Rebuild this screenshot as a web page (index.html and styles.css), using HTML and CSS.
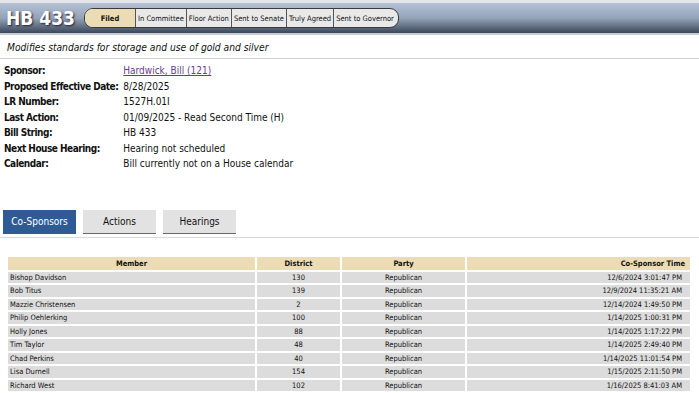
FILE: index.html
```html
<!DOCTYPE html>
<html lang="en">
<head>
    <meta charset="UTF-8">
    <title>HB 433</title>
    <link rel="stylesheet" href="styles.css">
</head>
<body>

<div class="header">
    <h1>HB 433</h1>
    <div class="steps">
        <span class="step current">Filed</span>
        <span class="step">In Committee</span>
        <span class="step">Floor Action</span>
        <span class="step">Sent to Senate</span>
        <span class="step">Truly Agreed</span>
        <span class="step">Sent to Governor</span>
    </div>
</div>

<div class="title">Modifies standards for storage and use of gold and silver</div>

<table class="info">
    <tr><td class="label">Sponsor:</td><td><a href="#">Hardwick, Bill (121)</a></td></tr>
    <tr><td class="label">Proposed Effective Date:</td><td>8/28/2025</td></tr>
    <tr><td class="label">LR Number:</td><td>1527H.01I</td></tr>
    <tr><td class="label">Last Action:</td><td>01/09/2025 - Read Second Time (H)</td></tr>
    <tr><td class="label">Bill String:</td><td>HB 433</td></tr>
    <tr><td class="label">Next House Hearing:</td><td>Hearing not scheduled</td></tr>
    <tr><td class="label">Calendar:</td><td>Bill currently not on a House calendar</td></tr>
</table>

<div class="tabs">
    <span class="tab active">Co-Sponsors</span>
    <span class="tab">Actions</span>
    <span class="tab">Hearings</span>
</div>

<table class="cosponsors">
    <tr><th class="member">Member</th><th class="district">District</th><th class="party">Party</th><th class="time">Co-Sponsor Time</th></tr>
    <tr><td>Bishop Davidson</td><td class="c">130</td><td class="c">Republican</td><td class="r">12/6/2024 3:01:47 PM</td></tr>
    <tr><td>Bob Titus</td><td class="c">139</td><td class="c">Republican</td><td class="r">12/9/2024 11:35:21 AM</td></tr>
    <tr><td>Mazzie Christensen</td><td class="c">2</td><td class="c">Republican</td><td class="r">12/14/2024 1:49:50 PM</td></tr>
    <tr><td>Philip Oehlerking</td><td class="c">100</td><td class="c">Republican</td><td class="r">1/14/2025 1:00:31 PM</td></tr>
    <tr><td>Holly Jones</td><td class="c">88</td><td class="c">Republican</td><td class="r">1/14/2025 1:17:22 PM</td></tr>
    <tr><td>Tim Taylor</td><td class="c">48</td><td class="c">Republican</td><td class="r">1/14/2025 2:49:40 PM</td></tr>
    <tr><td>Chad Perkins</td><td class="c">40</td><td class="c">Republican</td><td class="r">1/14/2025 11:01:54 PM</td></tr>
    <tr><td>Lisa Durnell</td><td class="c">154</td><td class="c">Republican</td><td class="r">1/15/2025 2:11:50 PM</td></tr>
    <tr><td>Richard West</td><td class="c">102</td><td class="c">Republican</td><td class="r">1/16/2025 8:41:03 AM</td></tr>
</table>

</body>
</html>
```

FILE: styles.css
```css
body {
    margin: 0;
    font-family: "DejaVu Sans Condensed", "DejaVu Sans", sans-serif;
    color: #111;
    background-color: #fff;
}

.header {
    display: flex;
    align-items: center;
    height: 30px;
    border-top: 3px solid #e4e6ea;
    border-bottom: 2px solid #c9ccd1;
    background: linear-gradient(#b5c2d4, #95a3b9 50%, #3b475a);
}

.header h1 {
    margin: 0 9px 0 6px;
    font-size: 19px;
    font-weight: bold;
    color: #fff;
    text-shadow: 1px 1px 2px #223;
}

.steps {
    display: flex;
    height: 18px;
    border: 1px solid #3a3a3a;
    border-radius: 9px;
    overflow: hidden;
    background-color: #e9e9e9;
}

.step {
    display: flex;
    align-items: center;
    justify-content: center;
    padding: 0 2px;
    font-size: 7.5px;
    color: #111;
    border-left: 1px solid #555;
}

.step:first-child {
    border-left: none;
}

.step:last-child {
    padding-right: 4px;
}

.step.current {
    width: 46px;
    font-weight: bold;
    background-color: #ecdcb5;
}

.title {
    margin: 7px 0 0;
    padding: 0 7px 5px;
    font-style: italic;
    font-size: 10.2px;
    border-bottom: 1px solid #d0d0d0;
}

.info {
    margin: 4px 0 0 2px;
    border-collapse: collapse;
    font-size: 10px;
}

.info td {
    padding: 0 0 0 5px;
    height: 15.5px;
}

.info td.label {
    font-weight: bold;
    letter-spacing: -0.5px;
    padding: 0 0 0 2px;
}

.info a {
    color: #6b3a8c;
}

.tabs {
    display: flex;
    gap: 7px;
    margin: 38px 0 0;
    padding: 0 3px 3px;
    border-bottom: 1px solid #d8d8d8;
}

.tab {
    width: 73px;
    height: 23px;
    line-height: 23px;
    text-align: center;
    font-size: 10px;
    background-color: #e2e2e2;
    border-bottom: 1px solid #666;
}

.tab.active {
    background-color: #2f5b95;
    color: #fff;
    border-bottom-color: #2f5b95;
}

.cosponsors {
    margin: 17px 0 0 6px;
    width: 686px;
    border-spacing: 2px;
    border-collapse: separate;
    font-size: 7.5px;
}

.cosponsors th {
    height: 13px;
    padding: 0;
    background-color: #ecdcb6;
    font-weight: bold;
}

.cosponsors td {
    height: 11.5px;
    padding: 0 2px;
    background-color: #dcdcdc;
}

.cosponsors th.member { width: 247px; }
.cosponsors th.district { width: 83px; }
.cosponsors th.party { width: 123px; }
.cosponsors th.time { text-align: right; padding-right: 5px; }

.cosponsors td.c { text-align: center; }
.cosponsors td.r { text-align: right; padding-right: 8px; }
```
